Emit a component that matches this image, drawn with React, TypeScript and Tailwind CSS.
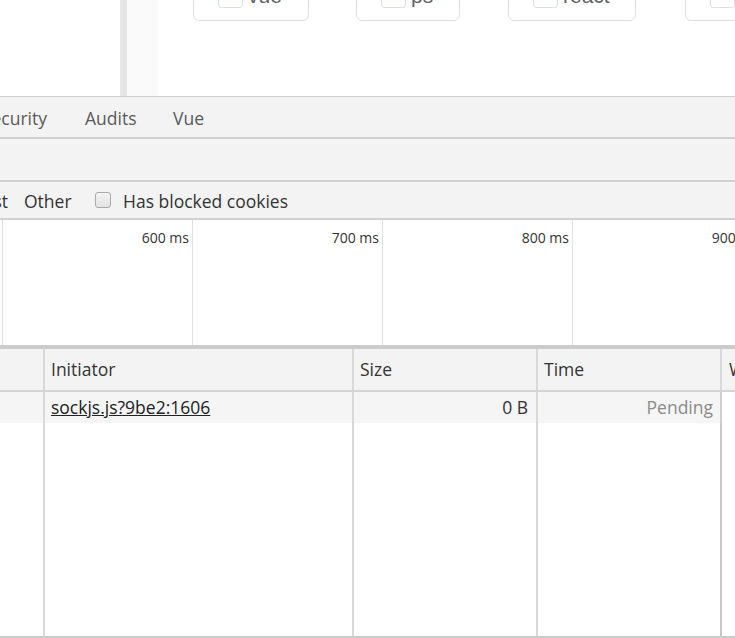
const cards = [
  { label: "vue", width: "w-[116px]", ml: "ml-[35px]" },
  { label: "ps", width: "w-[104px]", ml: "ml-[47px]" },
  { label: "react", width: "w-[128px]", ml: "ml-[48px]" },
  { label: "angular", width: "w-[140px]", ml: "ml-[49px]" },
];

function Card({ label, width, ml }: { label: string; width: string; ml: string }) {
  return (
    <div
      className={`${width} ${ml} h-[51px] -mt-[30px] shrink-0 flex items-center gap-[5px] pl-[24px] border border-[#dcdfe6] rounded-[6px] bg-white`}
    >
      <span className="w-[25px] h-[25px] rounded-[3px] border border-[#dcdfe6] bg-white shrink-0" />
      <span className="text-[21px] text-[#606266] font-['Liberation_Sans',sans-serif] whitespace-nowrap">{label}</span>
    </div>
  );
}

export default function App() {
  return (
    <div className="w-[735px] h-[638px] overflow-hidden bg-white flex flex-col font-['Open_Sans',sans-serif]">
      {/* page behind devtools */}
      <div className="h-[97px] shrink-0 flex border-b border-[#cfcfcf]">
        <div className="w-[120px] bg-white" />
        <div className="w-[7px] bg-[#e6e6e6]" />
        <div className="w-[31px] bg-[#fafafa]" />
        <div className="flex-1 flex items-start overflow-hidden">
          {cards.map((c) => (
            <Card key={c.label} {...c} />
          ))}
        </div>
      </div>

      {/* panel tabs */}
      <div className="h-[42px] shrink-0 flex items-center pt-[2px] bg-[#f3f3f3] border-b-2 border-[#d0d0d0] text-[17.5px] text-[#5a5a5a] whitespace-nowrap">
        <div className="w-[85px] flex justify-end pr-[38px]">
          <span>Security</span>
        </div>
        <div className="w-[88px]">Audits</div>
        <div>Vue</div>
      </div>

      {/* toolbar */}
      <div className="h-[43px] shrink-0 bg-[#f3f3f3] border-b-2 border-[#d0d0d0]" />

      {/* filter bar */}
      <div className="h-[38px] shrink-0 flex items-center pt-[2px] bg-[#f3f3f3] border-b-2 border-[#d0d0d0] text-[17.5px] text-[#333333] whitespace-nowrap">
        <div className="w-[24px] flex justify-end pr-[16px]">
          <span>Manifest</span>
        </div>
        <div className="w-[71px]">Other</div>
        <div className="w-[28px] flex">
          <span className="w-[16px] h-[16px] -mt-[2px] rounded-[3px] border border-[#a9a9a9] bg-gradient-to-b from-[#f4f4f4] to-[#e2e2e2]" />
        </div>
        <div>Has blocked cookies</div>
      </div>

      {/* overview timeline */}
      <div className="h-[125px] shrink-0 flex text-[14px] leading-[20px] text-[#333333] whitespace-nowrap">
        <div className="w-[3px] shrink-0 border-r border-[#e0e0e0]" />
        {["600 ms", "700 ms", "800 ms", "900 ms"].map((t) => (
          <div key={t} className="w-[190px] shrink-0 border-r border-[#e0e0e0] pt-[8px] pr-[3px] text-right">
            {t}
          </div>
        ))}
      </div>
      <div className="h-[4px] shrink-0 bg-[#cccccc]" />

      {/* table header */}
      <div className="h-[43px] shrink-0 flex bg-[#f3f3f3] border-b-2 border-[#d4d4d4] text-[17.5px] text-[#333333] whitespace-nowrap">
        <div className="w-[45px] shrink-0 border-r-2 border-[#d9d9d9]" />
        <div className="w-[309px] shrink-0 border-r-2 border-[#d9d9d9] pl-[6px] flex items-center">Initiator</div>
        <div className="w-[184px] shrink-0 border-r-2 border-[#d9d9d9] pl-[6px] flex items-center">Size</div>
        <div className="w-[184px] shrink-0 border-r-2 border-[#d9d9d9] pl-[6px] flex items-center">Time</div>
        <div className="flex-1 pl-[7px] flex items-center">Waterfall</div>
      </div>

      {/* request row */}
      <div className="h-[31px] shrink-0 flex text-[17.5px] whitespace-nowrap">
        <div className="w-[45px] shrink-0 bg-[#f5f5f5] border-r-2 border-[#d9d9d9]" />
        <div className="w-[309px] shrink-0 bg-[#f5f5f5] border-r-2 border-[#d9d9d9] pl-[6px] flex items-center">
          <span className="underline text-[#222222]">sockjs.js?9be2:1606</span>
        </div>
        <div className="w-[184px] shrink-0 bg-[#f5f5f5] border-r-2 border-[#d9d9d9] pr-[8px] flex items-center justify-end text-[#333333]">
          0 B
        </div>
        <div className="w-[184px] shrink-0 bg-[#f5f5f5] border-r-2 border-[#cfcfcf] pr-[7px] flex items-center justify-end text-[#8a8a8a]">
          Pending
        </div>
        <div className="flex-1 bg-white" />
      </div>

      {/* empty body */}
      <div className="flex-1 flex border-b-2 border-[#cccccc]">
        <div className="w-[45px] shrink-0 border-r-2 border-[#d9d9d9]" />
        <div className="w-[309px] shrink-0 border-r-2 border-[#d9d9d9]" />
        <div className="w-[184px] shrink-0 border-r-2 border-[#d9d9d9]" />
        <div className="w-[184px] shrink-0 border-r-2 border-[#c8c8c8]" />
        <div className="flex-1" />
      </div>
    </div>
  );
}
